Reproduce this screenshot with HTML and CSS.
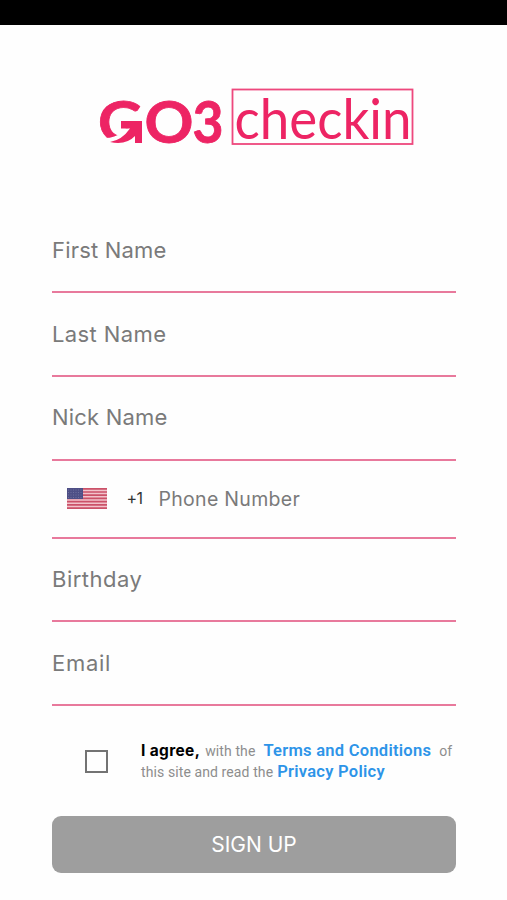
FILE: index.html
```html
<!DOCTYPE html>
<html lang="en">
<head>
<meta charset="utf-8">
<title>GO3 checkin</title>
<link rel="stylesheet" href="styles.css">
</head>
<body>
<div class="status-bar"></div>
<main class="page">
  <svg class="logo" width="318" height="60" viewBox="0 0 318 60">
    <g class="brand">
      <text class="letter" x="0" y="57" textLength="45" lengthAdjust="spacingAndGlyphs">G</text>
      <text class="letter" x="46.500" y="57" textLength="49" lengthAdjust="spacingAndGlyphs">O</text>
      <text class="letter" x="94.500" y="57" textLength="31" lengthAdjust="spacingAndGlyphs">3</text>
    </g>
    <path class="cut" d="M7 52Q17 52 24 46L31 42H22V33H47V60H7Z"/>
    <path class="mark" d="M23 35H44V57H37V50Q28 59.500 12 56Q24 54 32 42.500H23Z"/>
    <rect class="frame" x="134.500" y="3.500" width="180" height="54.500"/>
    <text class="product" x="136.500" y="53" textLength="177" lengthAdjust="spacingAndGlyphs">checkin</text>
  </svg>
  <form class="form">
    <div class="field"><input class="input first" placeholder="First Name"></div>
    <div class="field"><input class="input last" placeholder="Last Name"></div>
    <div class="field"><input class="input nick" placeholder="Nick Name"></div>
    <div class="field phone">
      <svg class="flag" width="40" height="21" viewBox="0 0 40 21">
        <rect width="40" height="21" fill="#f2c3cb"/>
        <path d="M0 .8H40M0 4H40M0 7.200H40M0 10.400H40M0 13.600H40M0 16.800H40M0 20.100H40" stroke="#cb5269" stroke-width="1.700"/>
        <rect width="16" height="11" fill="#4e4f86"/>
        <path d="M1 2H16M1 4.500H16M1 7H16M1 9.500H16" stroke="#7f80ab" stroke-width=".7" stroke-dasharray="1 1.500"/>
      </svg>
      <span class="code">+1</span>
      <input class="input number" placeholder="Phone Number">
    </div>
    <div class="field"><input class="input birth" placeholder="Birthday"></div>
    <div class="field"><input class="input email" placeholder="Email"></div>
    <div class="agree">
      <span class="checkbox"></span>
      <div class="terms">
        <div class="terms-line"><b class="lead">I agree,</b><span class="with">with the</span><a class="link tc">Terms and Conditions</a><span class="of">of</span></div>
        <div class="terms-line"><span class="read">this site and read the</span><a class="link pp">Privacy Policy</a></div>
      </div>
    </div>
    <button class="submit" type="button">SIGN UP</button>
  </form>
</main>
</body>
</html>
```
FILE: styles.css
```css
* { box-sizing: border-box; }
body { margin: 0; background: #fefefe; font-family: Inter, sans-serif; }
.status-bar { height: 25px; background: #000; }
.page { display: flex; flex-direction: column; padding: 61px 51px 0 52px; }
.logo { display: block; margin-left: 46px; overflow: visible; }
.brand, .mark, .product { fill: #ed2464; }
.letter { font: 700 57px/1 Lato, sans-serif; stroke: #ed2464; stroke-width: .8; }
.product { font: 400 57px/1 Lato, sans-serif; }
.cut { fill: #fefefe; }
.frame { fill: none; stroke: #ee487d; stroke-width: 1.800; }
.form { display: flex; flex-direction: column; margin-top: 63.500px; }
.field { display: flex; align-items: flex-start; height: 83.700px; padding-top: 26px; border-bottom: 2px solid #e8799c; }
.input { width: 100%; height: 29px; padding: 0; border: 0; outline: 0; background: none; font: 400 22px Inter, sans-serif; letter-spacing: .2px; color: #444; }
.input::placeholder { color: #7a7a7a; opacity: 1; }
.last { letter-spacing: .4px; }
.birth { letter-spacing: .5px; }
.email { letter-spacing: .7px; }
.phone { height: 78px; padding-top: 24px; }
.flag { flex: none; margin: 3px 20px 0 14.500px; }
.code { width: 32px; flex: none; padding-top: 3px; font-size: 16px; line-height: 20px; color: #333; letter-spacing: -.5px; }
.number { font-size: 19.500px; letter-spacing: .3px; }
.agree { display: flex; align-items: flex-start; height: 110.500px; padding: 34.500px 0 0 33px; }
.checkbox { flex: none; width: 23px; height: 23px; margin-top: 10px; border: 2.500px solid #737373; }
.terms { margin-left: 33px; font: 400 14px/21px Roboto, sans-serif; color: #8d8d8d; white-space: nowrap; }
.terms-line { display: flex; align-items: baseline; height: 21px; }
.lead { margin-right: 5px; color: #000; font: 700 15.500px/21px Inter, sans-serif; letter-spacing: .35px; }
.with { margin-right: 8px; letter-spacing: .1px; }
.link { color: #2d94e8; font: 600 16.500px/21px Roboto, sans-serif; letter-spacing: .27px; }
.tc { margin-right: 8px; }
.read { margin-right: 4px; letter-spacing: .1px; }
.submit { height: 57px; padding: 0; border: 0; border-radius: 9px; background: #9e9e9e; color: #fff; font: 400 21px Inter, sans-serif; }
```
